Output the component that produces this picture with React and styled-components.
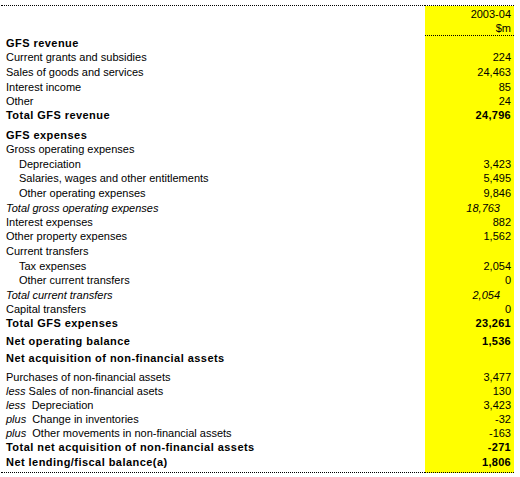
import React from "react";
import styled, { createGlobalStyle } from "styled-components";

const GlobalStyle = createGlobalStyle`
  body {
    margin: 0;
    background: #ffffff;
  }
`;

// kind: "head" (bold heading), "total" (bold), "sub" (italic subtotal), undefined = plain
const rows = [
  { label: "GFS revenue", kind: "head", h: 14 },
  { label: "Current grants and subsidies", value: "224", h: 14 },
  { label: "Sales of goods and services", value: "24,463", h: 15 },
  { label: "Interest income", value: "85", h: 15 },
  { label: "Other", value: "24", h: 14 },
  { label: "Total GFS revenue", value: "24,796", kind: "total", h: 14 },
  { label: "GFS expenses", kind: "head", h: 20 },
  { label: "Gross operating expenses", h: 14 },
  { label: "Depreciation", value: "3,423", indent: true, h: 15 },
  { label: "Salaries, wages and other entitlements", value: "5,495", indent: true, h: 14 },
  { label: "Other operating expenses", value: "9,846", indent: true, h: 15 },
  { label: "Total gross operating expenses", value: "18,763", kind: "sub", h: 15 },
  { label: "Interest expenses", value: "882", h: 14 },
  { label: "Other property expenses", value: "1,562", h: 14 },
  { label: "Current transfers", h: 15 },
  { label: "Tax expenses", value: "2,054", indent: true, h: 15 },
  { label: "Other current transfers", value: "0", indent: true, h: 14 },
  { label: "Total current transfers", value: "2,054", kind: "sub", h: 15 },
  { label: "Capital transfers", value: "0", h: 14 },
  { label: "Total GFS expenses", value: "23,261", kind: "total", h: 14 },
  { label: "Net operating balance", value: "1,536", kind: "total", h: 18 },
  { label: "Net acquisition of non-financial assets", kind: "head", h: 17 },
  { label: "Purchases of non-financial assets", value: "3,477", h: 19 },
  { prefix: "less", label: " Sales of non-financial asets", value: "130", h: 14 },
  { prefix: "less", label: "  Depreciation", value: "3,423", h: 14 },
  { prefix: "plus", label: "  Change in inventories", value: "-32", h: 14 },
  { prefix: "plus", label: "  Other movements in non-financial assets", value: "-163", h: 14 },
  { label: "Total net acquisition of non-financial assets", value: "-271", kind: "total", h: 14 },
  { label: "Net lending/fiscal balance(a)", value: "1,806", kind: "total", h: 19, last: true },
];

export default function App() {
  return (
    <>
      <GlobalStyle />
      <Sheet>
        <colgroup>
          <col style={{ width: 424 }} />
          <col style={{ width: 89 }} />
        </colgroup>
        <tbody>
          <Row $h={15}>
            <Label />
            <Value>2003-04</Value>
          </Row>
          <Row $h={15}>
            <Label />
            <Value $rule>$m</Value>
          </Row>
          {rows.map((r, i) => (
            <Row key={i} $h={r.h}>
              <Label $kind={r.kind} $indent={r.indent} $last={r.last}>
                {r.prefix && <Qualifier>{r.prefix}</Qualifier>}
                {r.label}
              </Label>
              <Value $kind={r.kind} $last={r.last}>
                {r.value}
              </Value>
            </Row>
          ))}
        </tbody>
      </Sheet>
    </>
  );
}

const Sheet = styled.table`
  margin: 5px 0 0 1px;
  width: 513px;
  table-layout: fixed;
  border-collapse: collapse;
  border-top: 1px dotted #000;
  border-bottom: 1px dotted #000;
  font-family: "Liberation Sans", Arial, sans-serif;
  font-size: 11px;
  line-height: 13px;
  color: #000;
`;

const Row = styled.tr`
  height: ${(p) => p.$h}px;
`;

const isBold = (k) => k === "head" || k === "total";

const Label = styled.td`
  padding: 0 0 ${(p) => (p.$last ? 3 : 0)}px ${(p) => (p.$indent ? 18 : 5)}px;
  vertical-align: bottom;
  white-space: pre;
  font-weight: ${(p) => (isBold(p.$kind) ? 700 : 400)};
  letter-spacing: ${(p) => (isBold(p.$kind) ? "0.45px" : "0")};
  font-style: ${(p) => (p.$kind === "sub" ? "italic" : "normal")};
`;

const Value = styled.td`
  padding: 0 ${(p) => (p.$kind === "sub" ? 14 : 3)}px ${(p) => (p.$last ? 3 : 0)}px 0;
  vertical-align: bottom;
  text-align: right;
  white-space: nowrap;
  background: #ffff00;
  font-weight: ${(p) => (p.$kind === "total" ? 700 : 400)};
  letter-spacing: ${(p) => (p.$kind === "total" ? "0.3px" : "0")};
  font-style: ${(p) => (p.$kind === "sub" ? "italic" : "normal")};
  border-bottom: ${(p) => (p.$rule ? "1px dotted #000" : "none")};
`;

const Qualifier = styled.i`
  font-style: italic;
`;
